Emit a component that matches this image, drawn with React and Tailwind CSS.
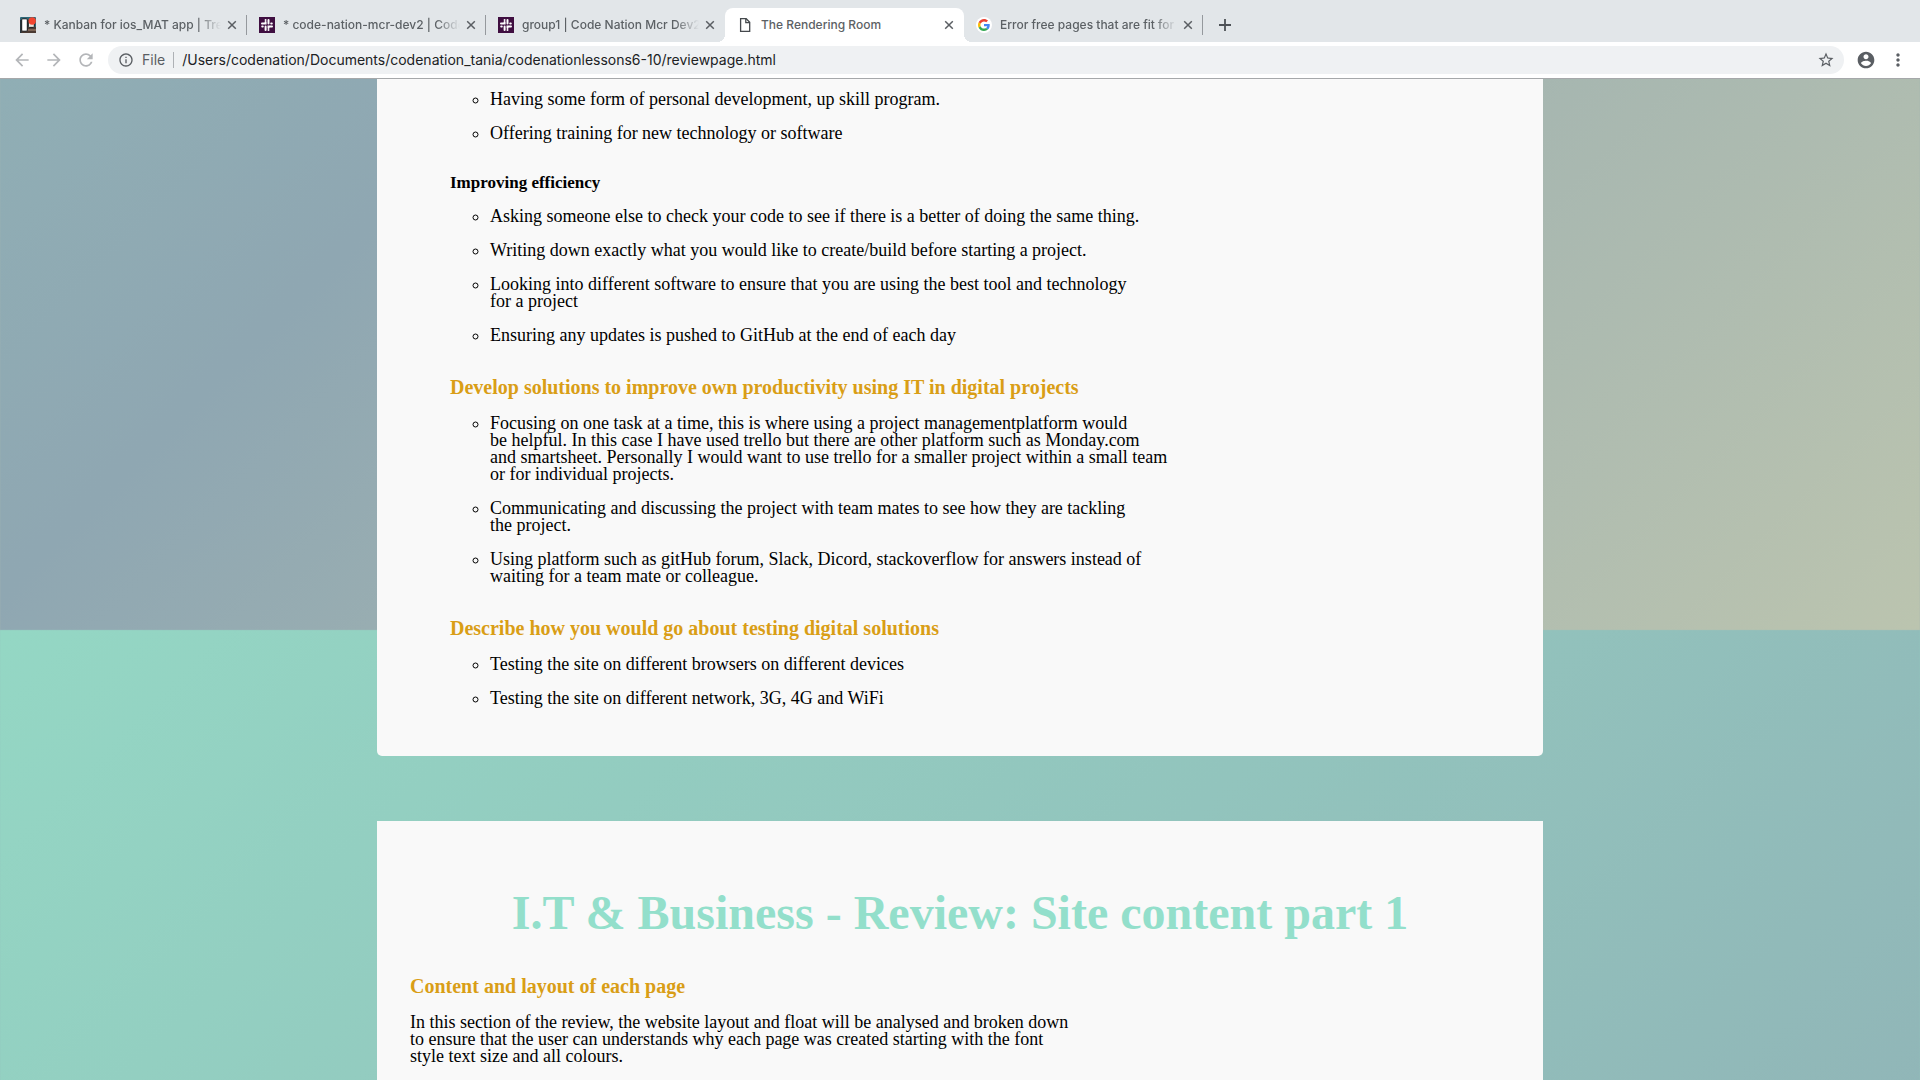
import React from "react";

const SlackIcon = () => (
  <svg viewBox="0 0 16 16" className="size-4 shrink-0" aria-hidden="true">
    <rect width="16" height="16" fill="#3f0e40" />
    <g stroke="#fff" strokeWidth="2" strokeLinecap="round" fill="none">
      <path d="M6.6 4.9v1.7H3" />
      <path d="M9.5 2.9v3.6M12.2 6.6h.6" />
      <path d="M13 9.4H9.5v1.7" />
      <path d="M6.6 9.5v3.6M3.2 9.4h.6" />
      <path d="M6.6 2.9v.1M9.5 13v.1" />
    </g>
  </svg>
);

const TrelloIcon = () => (
  <svg viewBox="0 0 16 16" className="size-4 shrink-0" aria-hidden="true">
    <rect width="16" height="16" rx="1" fill="#2d6878" />
    <path d="M0 10h16v6H0z" fill="#4b3a33" />
    <path d="M0 3h1.5v13H0z" fill="#27353d" />
    <path d="M8 12h8v2H8z" fill="#7d6455" />
    <rect x="1.7" y="1.8" width="5.6" height="12.4" rx="1" fill="#fff" stroke="#16181a" />
    <rect x="8.3" y="3" width="6" height="7.4" rx="1" fill="#e9e4dd" stroke="#16181a" />
    <circle cx="12.2" cy="4" r="3.7" fill="#f2452f" />
  </svg>
);

const FileIcon = () => (
  <svg viewBox="0 0 16 16" className="size-4 shrink-0" fill="none" stroke="#45494d" strokeWidth="1.3" aria-hidden="true">
    <path d="M3.6 1.7h5.6l3.5 3.6v9.1H3.6z" />
    <path d="M8.8 1.7v4h3.9" />
  </svg>
);

const GoogleIcon = () => (
  <svg viewBox="0 0 16 16" className="size-4 shrink-0" aria-hidden="true">
    <circle cx="8" cy="8" r="8" fill="#fff" />
    <g transform="translate(2 2) scale(.25)">
      <path fill="#ea4335" d="M24 9.5c3.54 0 6.71 1.22 9.21 3.6l6.85-6.85C35.9 2.38 30.47 0 24 0 14.62 0 6.51 5.38 2.56 13.22l7.98 6.19C12.43 13.72 17.74 9.5 24 9.5z" />
      <path fill="#4285f4" d="M46.98 24.55c0-1.57-.15-3.09-.38-4.55H24v9.02h12.94c-.58 2.96-2.26 5.48-4.78 7.18l7.73 6c4.51-4.18 7.09-10.36 7.09-17.65z" />
      <path fill="#fbbc05" d="M10.53 28.59c-.48-1.45-.76-2.99-.76-4.59s.27-3.14.76-4.59l-7.98-6.19C.92 16.46 0 20.12 0 24c0 3.88.92 7.54 2.56 10.78l7.97-6.19z" />
      <path fill="#34a853" d="M24 48c6.48 0 11.93-2.13 15.89-5.81l-7.73-6c-2.15 1.45-4.92 2.3-8.16 2.3-6.26 0-11.57-4.22-13.47-9.91l-7.98 6.19C6.51 42.62 14.62 48 24 48z" />
    </g>
  </svg>
);

const MATERIAL = {
  back: "M20 11H7.83l5.59-5.59L12 4l-8 8 8 8 1.41-1.41L7.83 13H20v-2z",
  forward: "M12 4l-1.41 1.41L16.17 11H4v2h12.17l-5.58 5.59L12 20l8-8z",
  reload: "M17.65 6.35C16.2 4.9 14.21 4 12 4c-4.42 0-7.99 3.58-7.99 8s3.57 8 7.99 8c3.73 0 6.84-2.55 7.73-6h-2.08c-.82 2.33-3.04 4-5.65 4-3.31 0-6-2.69-6-6s2.69-6 6-6c1.66 0 3.14.69 4.22 1.78L13 11h7V4l-2.35 2.35z",
  info: "M11 7h2v2h-2zm0 4h2v6h-2zm1-9C6.48 2 2 6.48 2 12s4.48 10 10 10 10-4.48 10-10S17.52 2 12 2zm0 18c-4.41 0-8-3.59-8-8s3.59-8 8-8 8 3.59 8 8-3.59 8-8 8z",
  star: "M22 9.24l-7.19-.62L12 2 9.19 8.63 2 9.24l5.46 4.73L5.82 21 12 17.27 18.18 21l-1.63-7.03L22 9.24zM12 15.4l-3.76 2.27 1-4.28-3.32-2.88 4.38-.38L12 6.1l1.71 4.04 4.38.38-3.32 2.88 1 4.28L12 15.4z",
  user: "M12 2C6.48 2 2 6.48 2 12s4.48 10 10 10 10-4.48 10-10S17.52 2 12 2zm0 3c1.66 0 3 1.34 3 3s-1.34 3-3 3-3-1.34-3-3 1.34-3 3-3zm0 14.2c-2.5 0-4.71-1.28-6-3.22.03-1.99 4-3.08 6-3.08 1.99 0 5.97 1.09 6 3.08-1.29 1.94-3.5 3.22-6 3.22z",
  more: "M12 8c1.1 0 2-.9 2-2s-.9-2-2-2-2 .9-2 2 .9 2 2 2zm0 2c-1.1 0-2 .9-2 2s.9 2 2 2 2-.9 2-2-.9-2-2-2zm0 6c-1.1 0-2 .9-2 2s.9 2 2 2 2-.9 2-2-.9-2-2-2z",
};

const Icon = ({ name, className }) => (
  <svg viewBox="0 0 24 24" fill="currentColor" className={className} aria-hidden="true">
    <path d={MATERIAL[name]} />
  </svg>
);

const TABS = [
  { title: "* Kanban for ios_MAT app | Tre", icon: TrelloIcon, divider: true },
  { title: "* code-nation-mcr-dev2 | Code", icon: SlackIcon, divider: true },
  { title: "group1 | Code Nation Mcr Dev2", icon: SlackIcon },
  { title: "The Rendering Room", icon: FileIcon, active: true },
  { title: "Error free pages that are fit for", icon: GoogleIcon, divider: true },
];

function Tab({ title, icon: TabIcon, active, divider }) {
  return (
    <div
      role="tab"
      aria-selected={!!active}
      className={
        "relative flex h-[34px] w-[239px] shrink-0 items-center pr-1 pb-[1px] pl-3 " +
        (active
          ? "rounded-t-lg bg-white before:absolute before:bottom-0 before:-left-2 before:size-2 before:bg-[radial-gradient(circle_at_0_0,transparent_8px,white_8px)] after:absolute after:-right-2 after:bottom-0 after:size-2 after:bg-[radial-gradient(circle_at_100%_0,transparent_8px,white_8px)]"
          : "")
      }
    >
      <TabIcon />
      <span
        className={
          "ml-2 min-w-0 flex-1 text-xs leading-5 font-medium whitespace-nowrap text-[#5c6165] " +
          (active ? "" : "[mask-image:linear-gradient(to_right,black_calc(100%-24px),transparent)]")
        }
      >
        {title}
      </span>
      <button type="button" aria-label={"Close " + title} className="flex h-5 w-[22px] items-center justify-center">
        <svg viewBox="0 0 10 10" className="size-[10px]" stroke="#5a5e63" strokeWidth="1.5" aria-hidden="true">
          <path d="M1.2 1.2l7.6 7.6M8.8 1.2L1.2 8.8" />
        </svg>
      </button>
      {divider && <span className="absolute top-[7px] right-0 h-5 w-px bg-[#95999d]" />}
    </div>
  );
}

function BrowserChrome() {
  return (
    <header className="shrink-0 border-b border-[#a6a8aa] bg-white font-['Inter','Liberation_Sans',sans-serif]">
      <div role="tablist" className="flex h-[42px] items-end bg-[#e2e6e9] pl-2">
        {TABS.map((tab) => (
          <Tab key={tab.title} {...tab} />
        ))}
        <button type="button" aria-label="New tab" className="mb-[3px] ml-2 flex size-7 items-center justify-center">
          <svg viewBox="0 0 12 12" className="size-3" stroke="#4d5156" strokeWidth="1.8" aria-hidden="true">
            <path d="M6 0v12M0 6h12" />
          </svg>
        </button>
      </div>
      <div className="flex h-9 items-center pr-3 pl-3 text-[#5a5e63]">
        <div className="flex gap-3 text-[#b4b6b9]">
          <button type="button" aria-label="Back"><Icon name="back" className="size-5" /></button>
          <button type="button" aria-label="Forward"><Icon name="forward" className="size-5" /></button>
          <button type="button" aria-label="Reload"><Icon name="reload" className="size-5" /></button>
        </div>
        <div className="ml-3 flex h-7 flex-1 items-center rounded-full bg-[#eff1f3] pr-[9px] pl-[10px] text-sm">
          <Icon name="info" className="size-4 shrink-0" />
          <span className="ml-2">File</span>
          <span className="mx-2 h-4 w-px bg-[#aeb1b5]" />
          <input
            type="text"
            aria-label="Address"
            defaultValue="/Users/codenation/Documents/codenation_tania/codenationlessons6-10/reviewpage.html"
            className="min-w-0 flex-1 bg-transparent text-[#202124] outline-none"
          />
          <button type="button" aria-label="Bookmark this page"><Icon name="star" className="size-[18px]" /></button>
        </div>
        <button type="button" aria-label="Profile" className="ml-3"><Icon name="user" className="size-5" /></button>
        <button type="button" aria-label="Menu" className="ml-3"><Icon name="more" className="size-5" /></button>
      </div>
    </header>
  );
}

const Lines = ({ lines }) => lines.map((line) => <span key={line} className="block">{line}</span>);

const Bullets = ({ items }) => (
  <ul className="list-[circle] space-y-[17px] pl-10">
    {items.map((lines) => (
      <li key={lines[0]}><Lines lines={lines} /></li>
    ))}
  </ul>
);

const SectionTitle = ({ children }) => (
  <h2 className="mb-[18px] text-xl leading-5 font-bold text-[#d99e16]">{children}</h2>
);

export default function App() {
  return (
    <div className="flex h-screen flex-col overflow-hidden">
      <BrowserChrome />
      <main className="min-h-0 flex-1 overflow-hidden bg-[linear-gradient(135deg,#94d7c4_0%,#8fa7b2_64%,#bbc4af_100%)] bg-[length:100%_3510px] bg-[position:0_551px] font-['Palatino','Liberation_Serif',serif] text-lg leading-[17px] text-black whitespace-nowrap">
        <div className="mx-auto flex w-full max-w-[1166px] flex-col gap-[65px]">
          <article className="rounded-b-[5px] bg-[#f9f9f9] px-[73px] pt-3 pb-[49px]">
            <Bullets
              items={[
                ["Having some form of personal development, up skill program."],
                ["Offering training for new technology or software"],
              ]}
            />
            <h3 className="mt-8 mb-[17px] text-[17px] leading-[17px] font-bold">Improving efficiency</h3>
            <Bullets
              items={[
                ["Asking someone else to check your code to see if there is a better of doing the same thing."],
                ["Writing down exactly what you would like to create/build before starting a project."],
                ["Looking into different software to ensure that you are using the best tool and technology", "for a project"],
                ["Ensuring any updates is pushed to GitHub at the end of each day"],
              ]}
            />
            <div className="pt-[33px]">
              <SectionTitle>Develop solutions to improve own productivity using IT in digital projects</SectionTitle>
            </div>
            <Bullets
              items={[
                [
                  "Focusing on one task at a time, this is where using a project managementplatform would",
                  "be helpful. In this case I have used trello but there are other platform such as Monday.com",
                  "and smartsheet. Personally I would want to use trello for a smaller project within a small team",
                  "or for individual projects.",
                ],
                ["Communicating and discussing the project with team mates to see how they are tackling", "the project."],
                ["Using platform such as gitHub forum, Slack, Dicord, stackoverflow for answers instead of", "waiting for a team mate or colleague."],
              ]}
            />
            <div className="pt-[33px]">
              <SectionTitle>Describe how you would go about testing digital solutions</SectionTitle>
            </div>
            <Bullets
              items={[
                ["Testing the site on different browsers on different devices"],
                ["Testing the site on different network, 3G, 4G and WiFi"],
              ]}
            />
          </article>
          <article className="bg-[#f9f9f9] px-[33px] pt-[67px] pb-12">
            <h1 className="text-center text-5xl leading-[50px] font-bold text-[#93dfcb]">
              I.T &amp; Business - Review: Site content part 1
            </h1>
            <div className="pt-[38px]">
              <SectionTitle>Content and layout of each page</SectionTitle>
            </div>
            <p>
              <Lines
                lines={[
                  "In this section of the review, the website layout and float will be analysed and broken down",
                  "to ensure that the user can understands why each page was created starting with the font",
                  "style text size and all colours.",
                ]}
              />
            </p>
          </article>
        </div>
      </main>
    </div>
  );
}
